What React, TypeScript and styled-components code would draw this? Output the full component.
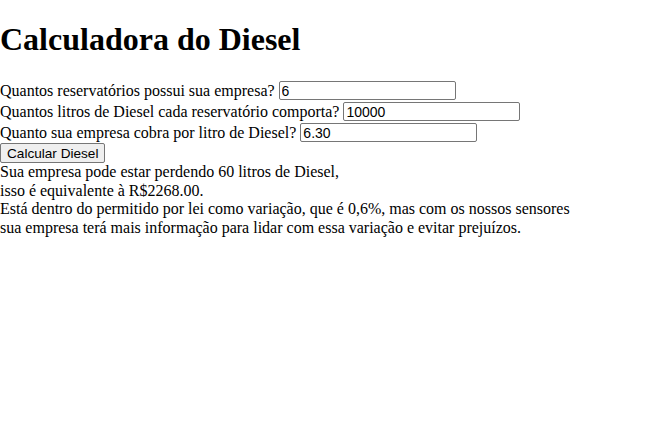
import React, { useState } from 'react';
import styled, { createGlobalStyle } from 'styled-components';

const GlobalStyle = createGlobalStyle`
  body {
    margin: 0;
    background: #ffffff;
    color: #000000;
    font-family: "Liberation Serif", "Times New Roman", serif;
    font-size: 16px;
  }
`;

const Title = styled.h1`
  font-size: 32px;
  font-weight: bold;
  margin: 21px 0 22px;
  line-height: 37px;
`;

const Form = styled.form`
  display: flex;
  flex-direction: column;
  align-items: flex-start;
`;

const Row = styled.div`
  height: 21px;
  display: flex;
  align-items: center;
`;

const Label = styled.label`
  line-height: 18px;
`;

const Input = styled.input`
  width: 171px;
  height: 15px;
  margin: 0 0 0 4px;
  padding: 1px 2px;
  border: 1px solid #767676;
  border-radius: 2px;
  font-family: "Liberation Sans", Arial, sans-serif;
  font-size: 14px;
  color: #000000;
  background: #ffffff;
  outline: none;
`;

const Button = styled.button`
  height: 20px;
  margin: 0;
  padding: 0 6px;
  border: 1px solid #767676;
  border-radius: 2px;
  background: #efefef;
  font-family: "Liberation Sans", Arial, sans-serif;
  font-size: 13.6px;
  color: #000000;
  cursor: pointer;
`;

const Result = styled.p`
  margin: 0;
  line-height: 18.5px;
`;

const App: React.FC = () => {
  const [tanks, setTanks] = useState('6');
  const [liters, setLiters] = useState('10000');
  const [price, setPrice] = useState('6.30');
  const [lost, setLost] = useState(60);
  const [value, setValue] = useState(2268);

  const calc = (e: React.FormEvent) => {
    e.preventDefault();
    const l = Number(tanks) * Number(liters) * 0.001;
    setLost(l);
    setValue(l * Number(price) * 6);
  };

  return (
    <>
      <GlobalStyle />
      <Title>Calculadora do Diesel</Title>
      <Form onSubmit={calc}>
        <Row>
          <Label>Quantos reservatórios possui sua empresa?</Label>
          <Input type="text" value={tanks} onChange={(e) => setTanks(e.target.value)} />
        </Row>
        <Row>
          <Label>Quantos litros de Diesel cada reservatório comporta?</Label>
          <Input type="text" value={liters} onChange={(e) => setLiters(e.target.value)} />
        </Row>
        <Row>
          <Label>Quanto sua empresa cobra por litro de Diesel?</Label>
          <Input type="text" value={price} onChange={(e) => setPrice(e.target.value)} />
        </Row>
        <Button type="submit">Calcular Diesel</Button>
      </Form>
      <Result>
        Sua empresa pode estar perdendo {lost} litros de Diesel,
        <br />
        isso é equivalente à R${value.toFixed(2)}.
        <br />
        Está dentro do permitido por lei como variação, que é 0,6%, mas com os nossos sensores
        <br />
        sua empresa terá mais informação para lidar com essa variação e evitar prejuízos.
      </Result>
    </>
  );
};

export default App;
